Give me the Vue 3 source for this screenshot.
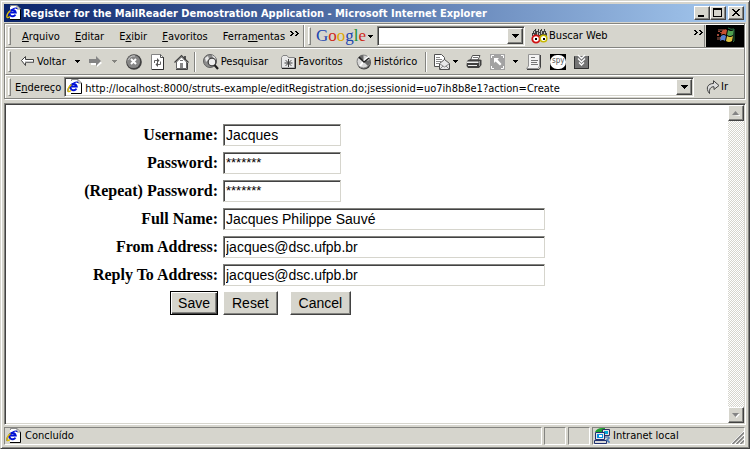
<script setup>
import { ref, reactive } from 'vue'

const title = 'Register for the MailReader Demostration Application - Microsoft Internet Explorer'
const menus = [
  ['', 'A', 'rquivo'],
  ['', 'E', 'ditar'],
  ['E', 'x', 'ibir'],
  ['', 'F', 'avoritos'],
  ['Ferra', 'm', 'entas']
]
const address = ref('http://localhost:8000/struts-example/editRegistration.do;jsessionid=uo7ih8b8e1?action=Create')
const query = ref('')

const initial = {
  username: 'Jacques',
  password: '*******',
  password2: '*******',
  fullName: 'Jacques Philippe Sauvé',
  fromAddress: 'jacques@dsc.ufpb.br',
  replyToAddress: 'jacques@dsc.ufpb.br'
}
const form = reactive({ ...initial })
const fields = [
  { name: 'username', label: 'Username:' },
  { name: 'password', label: 'Password:', secret: true },
  { name: 'password2', label: '(Repeat) Password:', secret: true },
  { name: 'fullName', label: 'Full Name:', wide: true },
  { name: 'fromAddress', label: 'From Address:', wide: true },
  { name: 'replyToAddress', label: 'Reply To Address:', wide: true }
]
const reset = () => Object.assign(form, initial)
</script>

<template>
  <div class="window">
    <svg class="defs" width="0" height="0" aria-hidden="true">
      <symbol id="ie" viewBox="0 0 16 16">
        <path d="M4 1H11L14 4V14H4Z" fill="#fff" />
        <path d="M4.5 2V.5H11" fill="none" stroke="#8c8c8c" />
        <path d="M4 14.5H14.5V4" fill="none" stroke="#000" />
        <path d="M11 .5V4H14.500Z" fill="#fff" stroke="#848484" />
        <path d="M9.400 9.600A3.200 3.200 0 1 1 9.700 7.500H4.500" fill="none" stroke="#0010d6" stroke-width="2" />
        <path d="M1.200 12.600C0 11 2.500 7 6 4.500C8.500 2.700 11 2.500 10.800 4" fill="none" stroke="#0010d6" stroke-width="1.200" />
        <path d="M.8 12.500C.6 10 2 7.500 4.500 5.500M1 12.500C2 13 3 12.300 4 11.500" fill="none" stroke="#e0c000" stroke-width="1.300" />
      </symbol>
      <symbol id="down" viewBox="0 0 7 4"><path d="M0 0H7V1H6V2H5V3H4V4H3V3H2V2H1V1H0Z" fill="currentColor" /></symbol>
      <symbol id="caret" viewBox="0 0 5 3"><path d="M0 0H5V1H4V2H3V3H2V2H1V1H0Z" fill="currentColor" /></symbol>
      <symbol id="chevrons" viewBox="0 0 9 5">
        <path d="M0 0H2V1H3V2H4V3H3V4H2V5H0V4H1V3H2V2H1V1H0ZM5 0H7V1H8V2H9V3H8V4H7V5H5V4H6V3H7V2H6V1H5Z" fill="#000" />
      </symbol>
    </svg>

    <header class="titlebar">
      <svg class="i16" aria-hidden="true"><use href="#ie" /></svg>
      <h1>{{ title }}</h1>
      <div class="captions">
        <button type="button" class="raised cap" aria-label="Minimize"><svg width="12" height="10" viewBox="0 0 12 10"><path d="M2 7H8V9H2Z" /></svg></button>
        <button type="button" class="raised cap" aria-label="Maximize"><svg width="12" height="10" viewBox="0 0 12 10"><path d="M1 0H10V9H1ZM2 2V8H9V2Z" fill-rule="evenodd" /></svg></button>
        <button type="button" class="raised cap close" aria-label="Close"><svg width="12" height="10" viewBox="0 0 12 10"><path d="M2 1H4V2H5V3H7V2H8V1H10V2H9V3H8V4H7V5H8V6H9V7H10V8H8V7H7V6H5V7H4V8H2V7H3V6H4V5H5V4H4V3H3V2H2Z" /></svg></button>
      </div>
    </header>

    <div class="rebar">
      <div class="band first">
        <nav class="menubar">
          <i class="grip"></i>
          <button v-for="m in menus" :key="m[2]" type="button" class="flat">{{ m[0] }}<u>{{ m[1] }}</u>{{ m[2] }}</button>
          <svg class="more" width="9" height="5" aria-hidden="true"><use href="#chevrons" /></svg>
        </nav>
        <div class="googlebar">
          <i class="grip"></i>
          <button type="button" class="flat google"><span class="g1">G</span><span class="g2">o</span><span class="g3">o</span><span class="g1">g</span><span class="g4">l</span><span class="g2">e</span></button>
          <svg class="gcaret" width="5" height="3" aria-hidden="true"><use href="#caret" /></svg>
          <div class="combo search">
            <input v-model="query" type="text" aria-label="Google">
            <button type="button" class="raised drop" aria-label="Show searches"><svg width="7" height="4"><use href="#down" /></svg></button>
          </div>
          <button type="button" class="flat buscar">
            <svg width="17" height="16" viewBox="0 0 17 16" aria-hidden="true">
              <path d="M3 2H4V1H5V3H7V1H8V4H9V2H10V1H11V3H13V1H14V3H15V5H16V8H1V5H2V3H3Z" fill="#404040" />
              <path d="M3 3H4V5H3ZM6 4H7V7H6ZM10 3H11V6H10ZM13 4H14V6H13ZM2 6H3V8H2ZM8 5H9V7H8Z" fill="#c0c0c0" />
              <circle cx="5" cy="11" r="3.700" fill="#fff" stroke="#d01010" stroke-width="1.800" />
              <circle cx="12.500" cy="10.500" r="3.300" fill="#fff" stroke="#c8b800" stroke-width="1.600" />
              <path d="M4 10H6V12H4ZM12 10H14V12H12Z" fill="#000" />
            </svg>Buscar Web
          </button>
          <svg class="more last" width="9" height="5" aria-hidden="true"><use href="#chevrons" /></svg>
        </div>
        <svg class="throbber" width="38" height="22" viewBox="0 0 38 22" aria-hidden="true">
          <path d="M0 0H38V22H0Z" fill="#000" />
          <path d="M12 5H14V7H12ZM11 9H13V11H11ZM13 12H15V14H13ZM14 7H16V8H14Z" fill="#a04838" />
          <path d="M12 4H18V6H12ZM11 12H14V15H11Z" fill="#503028" />
          <path d="M16 6Q19 3 21 5L20 10Q18 8 15 10Z" fill="#c85030" />
          <path d="M22 5Q25 7 28 5L27 10Q24 12 21 10Z" fill="#50a050" />
          <path d="M15 11Q18 9 20 11L19 16Q17 14 14 16Z" fill="#5880d0" />
          <path d="M21 11Q24 13 27 11L26 16Q23 18 20 16Z" fill="#d8c040" />
          <path d="M22 3Q25 5 28 4V16L27 17" fill="none" stroke="#287040" stroke-width="1" />
        </svg>
      </div>

      <div class="band second">
        <i class="grip"></i>
        <div class="tools nav">
          <button type="button" class="flat back">
            <svg width="14" height="11" viewBox="0 0 14 11" aria-hidden="true">
              <path d="M.5 4.500L4.500 .5V3.500H12.500V6.500H4.500V9.500Z" fill="#fff" stroke="#404040" /><path d="M4 6H12.500" stroke="#9a9a9a" />
            </svg>Voltar
          </button>
          <button type="button" class="flat" aria-label="Back history"><svg width="5" height="3"><use href="#caret" /></svg></button>
          <button type="button" class="flat dim" aria-label="Forward">
            <svg width="14" height="12" viewBox="0 0 14 12"><path d="M2 5H8V2L13 7L8 11V9H2Z" fill="#fff" /><path d="M0 3H7V0L12 5L7 10V7H0Z" fill="#848484" /></svg>
          </button>
          <button type="button" class="flat dim" aria-label="Forward history"><svg width="5" height="3"><use href="#caret" /></svg></button>
          <button type="button" class="flat" aria-label="Stop">
            <svg width="16" height="16" viewBox="0 0 16 16"><circle cx="8" cy="8" r="7.800" fill="#404040" /><circle cx="7.500" cy="7.500" r="6.600" fill="#868686" /><path d="M2.500 6Q4 1.500 9 2" fill="none" stroke="#ccc" /><path d="M5 5L10 10M10 5L5 10" stroke="#fff" stroke-width="2" /></svg>
          </button>
          <button type="button" class="flat" aria-label="Refresh">
            <svg width="14" height="16" viewBox="0 0 14 16"><path d="M.5 .5H9.500L12.500 3.500V15.500H.5Z" fill="#fff" stroke="#848484" /><path d="M1 15.500H12.500V3" fill="none" stroke="#303030" /><path d="M9.500 .5V3.500H12.500" fill="none" stroke="#555" /><path d="M3.500 9V6.500H7M9.500 7.500V10.500H6" fill="none" stroke="#666" /><path d="M6 4L8.500 6.500L6 9ZM7 8L4.500 10.500L7 13Z" fill="#555" /></svg>
          </button>
          <button type="button" class="flat" aria-label="Home">
            <svg width="15" height="16" viewBox="0 0 15 16"><path d="M10 2H12V6H10Z" fill="#555" /><path d="M2.500 8V14.500H12.500V8L7.500 3Z" fill="#fff" stroke="#666" /><path d="M.5 8.500L7.500 1.500L14.500 8.500" fill="none" stroke="#404040" stroke-width="1.200" /><path d="M6 9H9V14H6Z" fill="#888" /><path d="M6 6H9V7H6Z" fill="#777" /><path d="M13.500 9V15.500H2" fill="none" stroke="#444" /></svg>
          </button>
        </div>
        <i class="sep"></i>
        <div class="tools labelled">
          <button type="button" class="flat">
            <svg class="i16" viewBox="0 0 16 16" aria-hidden="true"><circle cx="7" cy="7" r="6.500" fill="#8c8c8c" stroke="#606060" /><path d="M2 4L5 2L6 5L3 8ZM9 1L12 3L13 6L10 4Z" fill="#e8e8e8" /><circle cx="9" cy="8" r="3.800" fill="#eee" stroke="#404040" stroke-width="1.200" /><path d="M11.500 11L15 15" stroke="#202020" stroke-width="2.200" /></svg>Pesquisar
          </button>
          <button type="button" class="flat">
            <svg width="15" height="16" viewBox="0 0 15 16" aria-hidden="true"><path d="M.5 14V3.500L2 1.500H6L7.500 3.500H13.500V14Z" fill="#e8e8e8" stroke="#848484" /><path d="M1 14.500H14.500V4" fill="none" stroke="#222" /><path d="M7.500 5V13M3.500 9H11.500M4.700 6.200L10.300 11.800M10.300 6.200L4.700 11.800" stroke="#404040" /></svg>Favoritos
          </button>
          <button type="button" class="flat">
            <svg class="i16" viewBox="0 0 16 16" aria-hidden="true"><circle cx="8" cy="8.500" r="7" fill="#444" /><circle cx="7.500" cy="7.500" r="6.500" fill="#d8d8d8" stroke="#888" /><path d="M7.500 7.500L2 4L5 1.300L7.500 1ZM7.500 7.500L14 6V9L12 12Z" fill="#686868" /><path d="M4 12L8 7L13 2.500" fill="none" stroke="#fff" stroke-width="2" /><path d="M3 3L8 8L13 4" fill="none" stroke="#202020" stroke-width="1.400" /></svg>Histórico
          </button>
        </div>
        <i class="sep"></i>
        <div class="tools extras">
          <button type="button" class="flat mail" aria-label="Mail">
            <svg class="i16" viewBox="0 0 16 16"><path d="M.5 .5H7.500L10.500 3.500V12.500H.5Z" fill="#fff" stroke="#505050" /><path d="M2 3.500H6M2 5.500H8M2 7.500H7M2 9.500H5" stroke="#888" /><path d="M5.500 15.500V9.500L10.500 5.500L15.500 9.500V15.500Z" fill="#e8e8e8" stroke="#505050" /><path d="M6 10L10.500 13L15 10M6 15L9 12M15 15L12 12" fill="none" stroke="#888" /></svg>
            <svg width="5" height="3"><use href="#caret" /></svg>
          </button>
          <button type="button" class="flat" aria-label="Print">
            <svg class="i16" viewBox="0 0 16 16"><path d="M4.500 6L6.500 1.500H14L12 6Z" fill="#fff" stroke="#505050" /><path d="M7 3.500H12" stroke="#777" /><path d="M1 7L3 5.500H14L15.500 6V11L13 14H2L.5 12Z" fill="#404040" /><path d="M1 7.500H12.500V9H1ZM2 11H11V12H2Z" fill="#eee" /><path d="M13.500 7V12" stroke="#999" /></svg>
          </button>
          <button type="button" class="flat" aria-label="Full screen">
            <svg width="15" height="16" viewBox="0 0 15 16"><path d="M0 0H15V16H0Z" fill="#a2a2a2" /><path d="M1.500 4V1.500H4M11 1.500H13.500V4M13.500 12V14.500H11M4 14.500H1.500V12" fill="none" stroke="#fff" /><path d="M4 4H9L7.500 5.500L11.500 10L10 11.500L5.500 7.500L4 9Z" fill="#fff" /></svg>
          </button>
          <button type="button" class="flat" aria-label="Edit options"><svg width="5" height="3"><use href="#caret" /></svg></button>
          <button type="button" class="flat" aria-label="Discuss">
            <svg class="i16" viewBox="0 0 16 16"><path d="M2.500 .5H13.500V12L12 14.500H.5L2.500 12Z" fill="#f4f4f4" stroke="#949494" /><path d="M1 15.500H13L14.500 13.500V1" fill="none" stroke="#404040" /><path d="M5 3.500H9M5 6.500H12M5 8.500H11M5 10.500H12" stroke="#777" /></svg>
          </button>
          <button type="button" class="flat spy" aria-label="Spy"><span>spy</span></button>
          <button type="button" class="flat" aria-label="Download">
            <svg class="i16" viewBox="0 0 16 16"><path d="M0 2H15V15H0Z" fill="#747474" /><path d="M.5 15V2.500M14.500 2V14.500H1" fill="none" stroke="#303030" /><path d="M4 1L7.500 4.500L11 1M4 4.500L7.500 8L11 4.500M5 8.500L7.500 11L10 8.500" fill="none" stroke="#fff" stroke-width="1.300" /></svg>
          </button>
        </div>
      </div>

      <form class="band third" @submit.prevent>
        <i class="grip"></i>
        <label for="address">E<u>n</u>dereço</label>
        <div class="combo address">
          <svg class="i16" aria-hidden="true"><use href="#ie" /></svg>
          <input id="address" v-model="address" type="text">
          <button type="button" class="raised drop" aria-label="Show addresses"><svg width="7" height="4"><use href="#down" /></svg></button>
        </div>
        <button type="submit" class="flat go">
          <svg width="14" height="14" viewBox="0 0 14 14" aria-hidden="true"><path d="M3.500 13.500C-1 8 2 3.500 7.500 3.500V.7L13 5.500L8 9.500V6.800C5 6.500 3 8.500 3.500 13.500Z" fill="#ddd" stroke="#404040" stroke-width="1" /></svg>Ir
        </button>
      </form>
    </div>

    <div class="viewport">
      <main class="page">
        <form @submit.prevent @reset.prevent="reset">
          <table class="fields">
            <tbody>
              <tr v-for="f in fields" :key="f.name">
                <th scope="row"><label :for="f.name">{{ f.label }}</label></th>
                <td>
                  <div class="box" :class="{ wide: f.wide, secret: f.secret }">
                    <input :id="f.name" v-model="form[f.name]" :type="f.secret ? 'password' : 'text'">
                    <span v-if="f.secret" class="mask" aria-hidden="true">{{ '*'.repeat(form[f.name].length) }}</span>
                  </div>
                </td>
              </tr>
              <tr>
                <th><button type="submit" class="push default">Save</button></th>
                <td>
                  <div class="actions">
                    <button type="reset" class="push">Reset</button>
                    <button type="button" class="push">Cancel</button>
                  </div>
                </td>
              </tr>
            </tbody>
          </table>
        </form>
      </main>
      <div class="scrollbar">
        <button type="button" class="raised" aria-label="Scroll up" disabled><svg width="8" height="5" viewBox="0 0 8 5"><path d="M1 5H8V4Z" fill="#fff" /><path d="M0 4H7L3.500 0Z" fill="#848484" /></svg></button>
        <button type="button" class="raised" aria-label="Scroll down" disabled><svg width="8" height="5" viewBox="0 0 8 5"><path d="M1 1H8L4.500 5Z" fill="#fff" /><path d="M0 0H7L3.500 4Z" fill="#848484" /></svg></button>
      </div>
    </div>

    <footer class="status">
      <div class="pane main"><svg class="i16" aria-hidden="true"><use href="#ie" /></svg>Concluído</div>
      <div class="pane"></div>
      <div class="pane"></div>
      <div class="pane zone">
        <svg class="i16" viewBox="0 0 16 16" aria-hidden="true">
          <path d="M1 4Q3 0 8 0H11V4H2Z" fill="#20a030" />
          <path d="M8.500 1.500H15.500V7.500H8.500Z" fill="#e0e0e0" stroke="#303060" /><path d="M10 3H14V6H10Z" fill="#00a8d8" />
          <path d="M1.500 4.500H10.500V11.500H1.500Z" fill="#e8e8e8" stroke="#203070" /><path d="M3 6H9V10H3Z" fill="#0890e0" /><path d="M5 7H8V9H5Z" fill="#fff" />
          <path d="M.5 12.500H12.500V15.500H.5Z" fill="#d8d8d8" stroke="#203070" /><path d="M11 9H15V11H13V13H15V15" fill="none" stroke="#2060b0" />
        </svg>Intranet local
        <svg class="sizer" width="13" height="13" viewBox="0 0 13 13" aria-hidden="true"><path d="M0 13L13 0M4 13L13 4M8 13L13 8" stroke="#fff" /><path d="M1.500 13L13 1.500M5.500 13L13 5.500M9.500 13L13 9.500" stroke="#848484" stroke-width="1.600" /></svg>
      </div>
    </footer>
  </div>
</template>

<style>
body {
  margin: 0;
}
</style>

<style scoped>
.window {
  --face: #d6d5cd;
  --shade: #848480;
  --dark: #424242;
  box-sizing: border-box;
  min-height: 100vh;
  display: flex;
  flex-direction: column;
  padding: 3px;
  background: var(--face);
  border: 1px solid;
  border-color: var(--face) var(--dark) var(--dark) var(--face);
  box-shadow: inset 1px 1px #fff, inset -1px -1px var(--shade);
  font: 11px/14px 'DejaVu Sans Condensed', 'DejaVu Sans', sans-serif;
  color: #000;
}
.window *,
.window *::before {
  box-sizing: border-box;
}
.defs {
  position: absolute;
}
svg {
  display: block;
  flex: none;
}
.i16 {
  width: 16px;
  height: 16px;
}
button,
input {
  margin: 0;
  padding: 0;
  border: 0;
  border-radius: 0;
  font: inherit;
  color: inherit;
  background: none;
  outline: 0;
}
.flat {
  display: flex;
  align-items: center;
  white-space: nowrap;
}
.raised {
  display: grid;
  place-items: center;
  background: var(--face);
  border: 1px solid;
  border-color: #fff var(--dark) var(--dark) #fff;
  box-shadow: inset -1px -1px var(--shade);
}

/* title bar */
.titlebar {
  display: flex;
  align-items: center;
  height: 18px;
  padding: 0 2px;
  gap: 1px;
  background: linear-gradient(90deg, #0a246a, #a6caf0);
}
h1 {
  flex: 1;
  margin: 0;
  padding-top: 2px;
  font: inherit;
  font-weight: bold;
  color: #fff;
  white-space: nowrap;
  overflow: hidden;
}
.captions {
  display: flex;
}
.cap {
  width: 16px;
  height: 14px;
}
.close {
  margin-left: 2px;
}

/* toolbars */
.rebar {
  margin: 1px 1px 4px 0;
  border: 1px solid var(--shade);
  box-shadow: 1px 1px #fff;
}
.band {
  display: flex;
  align-items: center;
  border-top: 1px solid #fff;
  border-left: 1px solid #fff;
  border-bottom: 1px solid var(--shade);
}
.band:last-child {
  border-bottom: 0;
}
.first {
  height: 24px;
  align-items: stretch;
}
.second {
  height: 27px;
  padding-left: 2px;
}
.third {
  height: 23px;
  padding-left: 2px;
}
.grip {
  flex: none;
  align-self: stretch;
  width: 3px;
  margin: 2px 0;
  border: 1px solid;
  border-color: #fff var(--shade) var(--shade) #fff;
}
.menubar {
  display: flex;
  align-items: center;
  gap: 15px;
  width: 298px;
  padding-left: 2px;
  border-right: 1px solid var(--shade);
}
.menubar .grip {
  margin-right: -4px;
}
.menubar .flat,
.third label {
  padding-top: 2px;
}
.more {
  align-self: flex-start;
  margin: 6px 0 0 -10px;
}
.googlebar {
  flex: 1;
  display: flex;
  align-items: center;
  padding-left: 3px;
  border-left: 1px solid #fff;
  border-right: 1px solid var(--shade);
}
.google {
  margin-left: 5px;
  font: 17px/20px 'Liberation Serif', serif;
}
.g1 { color: #1c45b0; }
.g2 { color: #d02818; }
.g3 { color: #e0a800; }
.g4 { color: #189030; }
.gcaret {
  margin: 0 4px 0 2px;
}
.combo {
  display: flex;
  align-items: center;
  height: 20px;
  padding: 1px;
  background: #fff;
  border: 1px solid;
  border-color: var(--shade) #fff #fff var(--shade);
  box-shadow: inset 1px 1px var(--dark), inset -1px -1px var(--face);
}
.combo input {
  flex: 1;
  min-width: 0;
  height: 16px;
  padding-top: 2px;
}
.drop {
  align-self: stretch;
  width: 16px;
}
.search {
  flex: 0 1 148px;
}
.buscar {
  gap: 1px;
  margin-left: 6px;
}
.last {
  margin: 5px 1px 0 auto;
}
.throbber {
  margin-left: 1px;
}
.tools {
  display: flex;
  align-items: center;
}
.nav {
  gap: 9px;
  margin-left: 10px;
}
.back {
  gap: 2px;
}
.dim {
  color: var(--shade);
}
.sep {
  width: 2px;
  height: 20px;
  border-left: 1px solid var(--shade);
  border-right: 1px solid #fff;
}
.nav + .sep {
  margin: 0 7px 0 5px;
}
.labelled {
  gap: 13px;
}
.labelled .flat {
  gap: 2px;
}
.labelled + .sep {
  margin: 0 7px 0 8px;
}
.extras {
  gap: 8px;
}
.mail {
  gap: 3px;
}
.spy {
  justify-content: center;
  width: 16px;
  height: 16px;
  background: #000;
}
.spy span {
  width: 16px;
  height: 14px;
  border-radius: 7px;
  background: #fff;
  color: #555;
  font-size: 8px;
  line-height: 12px;
  text-align: center;
}
.third label {
  margin: 0 3px 0 4px;
}
.address {
  flex: 1;
}
.address .i16 {
  margin: 0 2px 0 1px;
}
.go {
  gap: 1px;
  margin: 0 16px 0 12px;
}

/* document area */
.viewport {
  flex: 1;
  display: flex;
  background: #fff;
  border: 1px solid;
  border-color: var(--shade) #fff #fff var(--shade);
  padding: 1px;
  box-shadow: inset 1px 1px var(--dark), inset -1px -1px var(--face);
}
.page {
  flex: 1;
  padding: 16px 10px 16px 12px;
}
.scrollbar {
  display: flex;
  flex-direction: column;
  justify-content: space-between;
  width: 16px;
  background: repeating-conic-gradient(#fff 0 25%, #d6d5cd 0 50%) 0 0 / 2px 2px;
}
.scrollbar .raised {
  height: 16px;
}
.fields {
  width: 100%;
  border-spacing: 0;
  font: 16px/20px 'Liberation Serif', 'Times New Roman', serif;
}
.fields th,
.fields td {
  height: 28px;
  padding: 0 3px 0 2px;
  vertical-align: middle;
}
.fields th {
  width: 29%;
  text-align: right;
  white-space: nowrap;
}
.box {
  display: grid;
  width: 118px;
}
.wide {
  width: 322px;
}
.box input,
.mask {
  grid-area: 1 / 1;
  width: 100%;
  font: 14px/16px 'Liberation Sans', Arial, sans-serif;
}
.box input {
  height: 22px;
  padding: 0 2px;
  border: 1px solid;
  border-color: var(--shade) var(--face) var(--face) var(--shade);
  box-shadow: inset 1px 1px var(--dark);
}
.secret input {
  color: transparent;
}
.mask {
  padding: 3px;
  font-size: 13px;
  pointer-events: none;
}
.push {
  height: 24px;
  padding: 0 8px;
  background: var(--face);
  border: 1px solid;
  border-color: #fff var(--dark) var(--dark) #fff;
  box-shadow: inset -1px -1px var(--shade);
  font: 14px/20px 'Liberation Sans', Arial, sans-serif;
}
.default {
  padding: 0 7px;
  border-color: #000;
  box-shadow: inset 1px 1px #fff, inset -1px -1px var(--dark), inset -2px -2px var(--shade);
}
.actions {
  display: flex;
  gap: 12px;
}

/* status bar */
.status {
  display: flex;
  gap: 2px;
  margin: 2px 1px 0 0;
}
.pane {
  display: flex;
  align-items: center;
  gap: 3px;
  width: 22px;
  height: 18px;
  padding-left: 1px;
  border: 1px solid;
  border-color: var(--shade) #fff #fff var(--shade);
}
.main {
  flex: 1;
}
.zone {
  width: 153px;
}
.sizer {
  margin-left: auto;
  align-self: flex-end;
}
</style>
